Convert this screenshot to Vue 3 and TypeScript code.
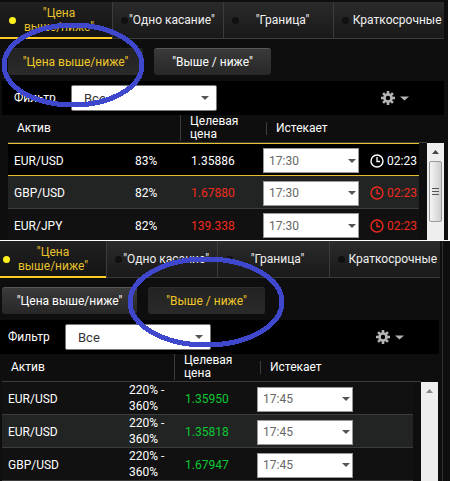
<script setup lang="ts">
interface Row {
  asset: string
  payout: string
  price: string
  expiry: string
  left?: string
  tone: 'plain' | 'down' | 'up'
  selected?: boolean
}

interface Panel {
  id: string
  kind: 'first' | 'second'
  mode: number
  rows: Row[]
}

const tabs: string[] = ['"Цена выше/ниже"', '"Одно касание"', '"Граница"', 'Краткосрочные']
const modes: string[] = ['"Цена выше/ниже"', '"Выше / ниже"']

const panels: Panel[] = [
  {
    id: 'a',
    kind: 'first',
    mode: 0,
    rows: [
      { asset: 'EUR/USD', payout: '83%', price: '1.35886', expiry: '17:30', left: '02:23', tone: 'plain', selected: true },
      { asset: 'GBP/USD', payout: '82%', price: '1.67880', expiry: '17:30', left: '02:23', tone: 'down' },
      { asset: 'EUR/JPY', payout: '82%', price: '139.338', expiry: '17:30', left: '02:23', tone: 'down' },
    ],
  },
  {
    id: 'b',
    kind: 'second',
    mode: 1,
    rows: [
      { asset: 'EUR/USD', payout: '220% - 360%', price: '1.35950', expiry: '17:45', tone: 'up' },
      { asset: 'EUR/USD', payout: '220% - 360%', price: '1.35818', expiry: '17:45', tone: 'up' },
      { asset: 'GBP/USD', payout: '220% - 360%', price: '1.67947', expiry: '17:45', tone: 'up' },
    ],
  },
]

const teeth: number[] = [0, 45, 90, 135, 180, 225, 270, 315]
</script>

<template>
  <main class="page">
    <section v-for="panel in panels" :key="panel.id" class="panel" :class="panel.kind">
      <nav class="tabs">
        <button v-for="(tab, i) in tabs" :key="tab" type="button" class="tab" :class="{ active: i === 0 }">
          <span class="dot"></span>
          <span class="tab-text"><template v-for="word in tab.split(' ')" :key="word"><span class="word">{{ word }}</span>{{ ' ' }}</template></span>
        </button>
      </nav>

      <div class="modes">
        <button v-for="(mode, i) in modes" :key="mode" type="button" class="mode" :class="{ on: panel.mode === i }">
          {{ mode }}
        </button>
      </div>

      <div class="filter">
        <label :for="'filter-' + panel.id">Фильтр</label>
        <span class="pick filter-pick">
          <select :id="'filter-' + panel.id">
            <option>Все</option>
          </select>
        </span>
        <button type="button" class="gear" aria-label="Настройки">
          <svg width="14" height="14" viewBox="0 0 14 14">
            <rect v-for="a in teeth" :key="a" x="5.7" y="0" width="2.6" height="4" fill="#b4b4b4" :transform="`rotate(${a} 7 7)`" />
            <circle cx="7" cy="7" r="3.5" fill="none" stroke="#b4b4b4" stroke-width="2.6" />
          </svg>
          <svg width="9" height="5" viewBox="0 0 9 5"><path d="M0 0.5H9L4.5 4.5Z" fill="#b4b4b4" /></svg>
        </button>
      </div>

      <div class="quotes">
        <table>
          <colgroup>
            <col class="c-asset" /><col class="c-payout" /><col class="c-price" /><col class="c-expiry" /><col />
          </colgroup>
          <thead>
            <tr>
              <th colspan="2" class="h-asset">Актив</th>
              <th class="h-top"><div class="h-price">Целевая цена</div></th>
              <th colspan="2"><div class="h-expiry">Истекает</div></th>
            </tr>
          </thead>
          <tbody>
            <tr v-for="(row, i) in panel.rows" :key="i" :class="[row.tone, { selected: row.selected }]">
              <td class="asset">{{ row.asset }}</td>
              <td class="payout">{{ row.payout }}</td>
              <td class="price">{{ row.price }}</td>
              <td>
                <span class="pick time-pick">
                  <select :aria-label="'Истекает ' + row.asset">
                    <option>{{ row.expiry }}</option>
                  </select>
                </span>
              </td>
              <td>
                <span v-if="row.left" class="left">
                  <svg width="14" height="14" viewBox="0 0 14 14" fill="none" stroke="currentColor">
                    <circle cx="7" cy="7" r="6" stroke-width="1.4" />
                    <path d="M7 3V7.5H10" stroke-width="1.3" />
                  </svg>
                  {{ row.left }}
                </span>
              </td>
            </tr>
          </tbody>
        </table>
        <div class="scroll">
          <svg class="arrow" width="7" height="4" viewBox="0 0 7 4"><path d="M0 4L3.5 0L7 4Z" fill="currentColor" /></svg>
          <div v-if="panel.kind === 'first'" class="thumb"><i></i><i></i><i></i></div>
        </div>
      </div>

      <svg v-if="panel.kind === 'first'" class="ring ring-first" width="146" height="88" viewBox="0 0 146 88">
        <ellipse cx="73" cy="44" rx="69" ry="40" />
      </svg>
      <svg v-else class="ring ring-second" width="160" height="96" viewBox="0 0 160 96">
        <ellipse cx="80" cy="48" rx="76" ry="43" />
      </svg>
    </section>
  </main>
</template>

<style>
body {
  margin: 0;
  background: #0e0e0e;
}
</style>

<style scoped>
.page {
  font-family: Roboto, "Liberation Sans", sans-serif;
  font-size: 12px;
  color: #fff;
  overflow: hidden;
}
button,
select {
  font: inherit;
  margin: 0;
  border: 0;
  padding: 0;
}
.panel {
  position: relative;
  background: #0e0e0e;
}
.first {
  padding-top: 2px;
  border-right: 2px solid #fff;
  border-bottom: 1px solid #fff;
}
.second {
  margin-right: 7px;
  border-right: 1px solid #333;
}

.tabs {
  display: flex;
  height: 37px;
}
.first .tabs {
  margin-right: 4px;
}
.second .tabs {
  margin-right: 2px;
}
.tab {
  position: relative;
  box-sizing: border-box;
  flex: 1 1 111px;
  min-width: 0;
  padding-left: 8px;
  border-left: 1px solid #3c3c3c;
  border-bottom: 1px solid #3c3c3c;
  background: linear-gradient(#2b2b2b, #191919);
  color: #f0f0f0;
  line-height: 14px;
}
.tab:last-child {
  padding-left: 16px;
}
.tab.active {
  flex: 0 0 112px;
  padding: 0 8px 0 14px;
  border-left: 0;
  border-bottom: 2px solid #ffc926;
  background: linear-gradient(#202020, #141414);
  color: #e6c12c;
}
.second .tab.active {
  margin-left: -6px;
}
.dot {
  position: absolute;
  left: 8px;
  top: 15px;
  width: 7px;
  height: 7px;
  border-radius: 50%;
  background: #101010;
}
.active .dot {
  left: 9px;
  background: #fff01e;
}
.tab-text {
  position: relative;
}
.word {
  display: inline-block;
  white-space: nowrap;
}

.modes {
  display: flex;
  gap: 11px;
  padding: 9px 8px 6px;
}
.second .modes {
  padding-left: 2px;
}
.mode {
  box-sizing: border-box;
  width: 135px;
  height: 27px;
  border-top: 1px solid #5a5651;
  border-radius: 3px;
  background: linear-gradient(#3a3a3a, #272727);
  color: #fff;
}
.mode + .mode {
  width: 117px;
}
.mode.on {
  border-top-color: #2c2c2c;
  background: linear-gradient(#232323, #2a2a2a);
  color: #f0c828;
}

.filter {
  display: flex;
  align-items: center;
  height: 34px;
  margin: 0 4px 0 2px;
  padding: 0 35px 0 12px;
  background: #000;
}
.second .filter {
  margin: 0 3px 0 0;
  padding: 0 35px 0 8px;
}
.filter label {
  width: 57px;
}
.pick {
  position: relative;
  display: block;
}
.pick::after {
  content: "";
  position: absolute;
  right: 8px;
  top: 50%;
  margin-top: -2px;
  border: 4px solid transparent;
  border-top-color: #555;
  border-bottom: 0;
  pointer-events: none;
}
.pick select {
  appearance: none;
  display: block;
  box-sizing: border-box;
  width: 100%;
  background: #fff;
}
.filter-pick {
  width: 146px;
}
.filter-pick select {
  height: 26px;
  padding-left: 12px;
  border: 1px solid #777;
  border-radius: 2px;
  color: #333;
  font-size: 13px;
}
.gear {
  display: flex;
  align-items: center;
  gap: 5px;
  margin-left: auto;
  background: none;
}

.quotes {
  display: flex;
  gap: 8px;
  padding: 0 4px 0 8px;
}
.second .quotes {
  padding-left: 2px;
}
table {
  flex: 1;
  min-width: 0;
  width: 100%;
  table-layout: fixed;
  border-spacing: 0;
}
.c-asset {
  width: 127px;
}
.c-payout {
  width: 45px;
}
.c-price {
  width: 83px;
}
.c-expiry {
  width: 107px;
}
th {
  position: relative;
  height: 27px;
  padding: 0;
  border-bottom: 1px solid #3c3c3c;
  font-weight: 400;
  text-align: left;
  line-height: 13px;
}
.h-top {
  vertical-align: top;
}
th:last-child::after {
  content: "";
  position: absolute;
  right: -8px;
  bottom: -1px;
  width: 8px;
  height: 1px;
  background: #3c3c3c;
}
.h-asset {
  padding-left: 9px;
}
.h-price {
  border-left: 1px solid #3c3c3c;
  padding-left: 9px;
}
.h-expiry {
  margin-left: 3px;
  border-left: 1px solid #3c3c3c;
  padding-left: 9px;
}
td {
  height: 30px;
  padding: 2px 0 0;
  border-bottom: 1px solid #3c3c3c;
  background: #111;
  line-height: 16px;
}
.second .payout {
  height: 32px;
  padding-top: 0;
}
.first tr:last-child td {
  height: 29px;
  border-bottom: 0;
}
tr:nth-child(2) td {
  background: #222424;
}
.selected td {
  height: 29px;
  border-top: 1px solid #e6c12c;
  border-bottom-color: #e6c12c;
  background: #000;
}
.asset {
  padding-left: 6px;
}
.price {
  padding-left: 11px;
}
.down .price,
.down .left {
  color: #f02a1c;
}
.up .price {
  color: #0cc832;
}
.time-pick {
  width: 96px;
}
.time-pick::after {
  right: 3px;
}
.time-pick select {
  height: 25px;
  padding-left: 5px;
  border: 1px solid #999;
  color: #666;
}
.left {
  display: flex;
  align-items: center;
  gap: 3px;
}

.scroll {
  flex: 0 0 17px;
  box-sizing: border-box;
  margin-top: 28px;
  padding: 7px 2px 0;
  background: #eee;
  color: #444;
}
.second .scroll {
  color: #888;
}
.arrow {
  display: block;
  margin: 0 auto 7px;
}
.thumb {
  display: flex;
  flex-direction: column;
  align-items: center;
  justify-content: center;
  gap: 2px;
  box-sizing: border-box;
  height: 61px;
  border: 1px solid #999;
  border-radius: 2px;
  background: linear-gradient(90deg, #f4f4f4, #cfcfcf);
}
.thumb i {
  width: 7px;
  height: 1px;
  background: #555;
}

.ring {
  position: absolute;
  pointer-events: none;
  fill: none;
  stroke: #3f48cc;
  stroke-width: 5px;
  shape-rendering: crispEdges;
}
.ring-first {
  left: 0;
  top: 21px;
}
.ring-second {
  left: 126px;
  top: 13px;
}
</style>
